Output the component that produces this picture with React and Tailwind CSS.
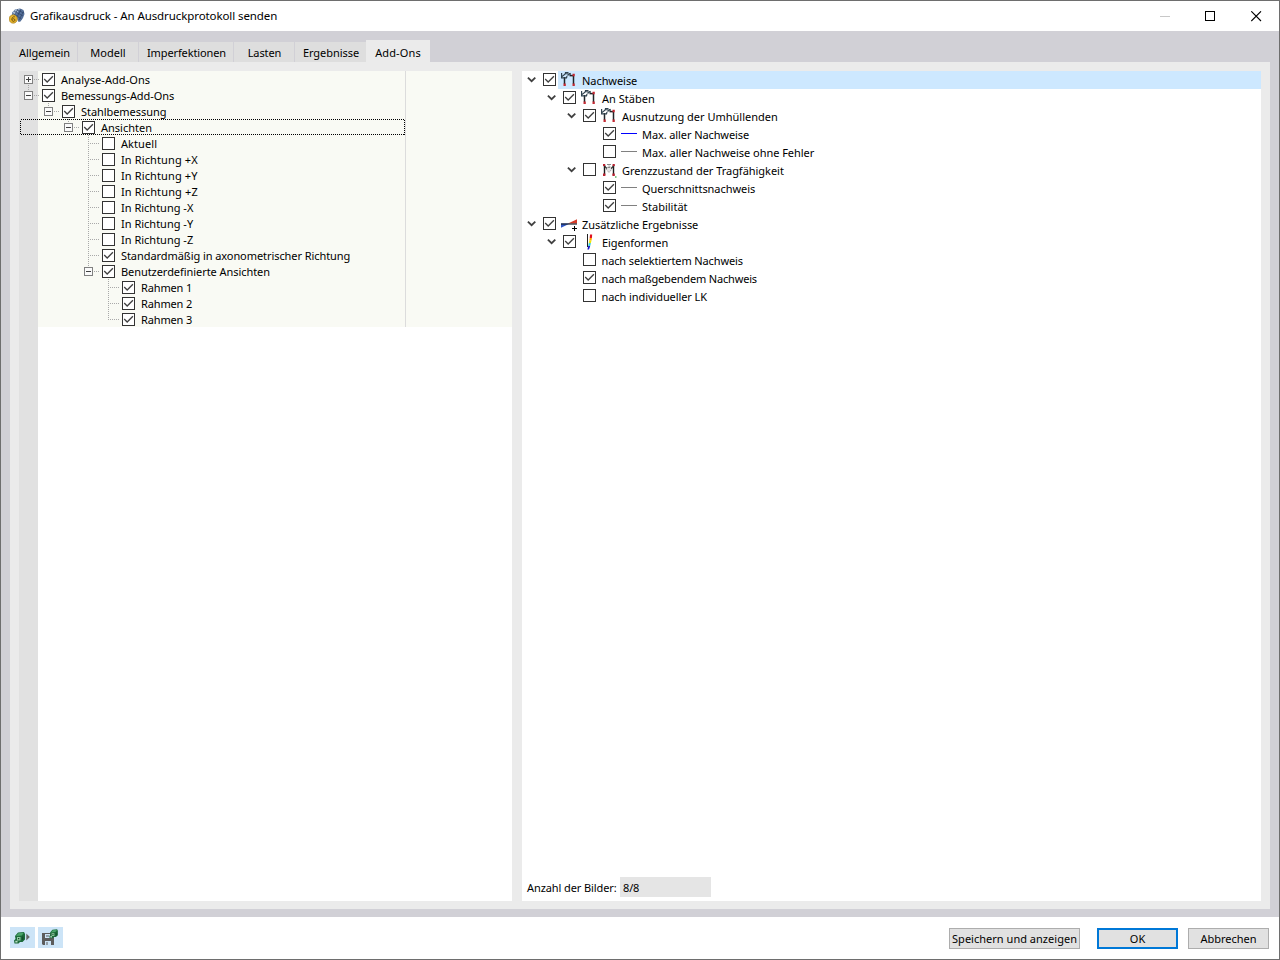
import React from "react";

const leftTree = [
  { level: 0, state: "plus", checked: true, label: "Analyse-Add-Ons", guide: "start", tracking: "tracking-[0.06px]" },
  { level: 0, state: "minus", checked: true, label: "Bemessungs-Add-Ons", guide: "end", tracking: "tracking-[-0.06px]" },
  { level: 1, state: "minus", checked: true, label: "Stahlbemessung", guide: "end", tracking: "tracking-[-0.06px]" },
  { level: 2, state: "minus", checked: true, label: "Ansichten", guide: "end", focused: true },
  { level: 3, checked: false, label: "Aktuell", tracking: "tracking-[0.08px]" },
  { level: 3, checked: false, label: "In Richtung +X", tracking: "tracking-[0.12px]" },
  { level: 3, checked: false, label: "In Richtung +Y", tracking: "tracking-[0.12px]" },
  { level: 3, checked: false, label: "In Richtung +Z", tracking: "tracking-[0.14px]" },
  { level: 3, checked: false, label: "In Richtung -X" },
  { level: 3, checked: false, label: "In Richtung -Y" },
  { level: 3, checked: false, label: "In Richtung -Z" },
  { level: 3, checked: true, label: "Standardmäßig in axonometrischer Richtung", tracking: "tracking-[-0.07px]" },
  { level: 3, state: "minus", checked: true, label: "Benutzerdefinierte Ansichten", guide: "end", tracking: "tracking-[-0.06px]" },
  { level: 4, checked: true, label: "Rahmen 1", tracking: "tracking-[-0.14px]" },
  { level: 4, checked: true, label: "Rahmen 2", tracking: "tracking-[-0.14px]" },
  { level: 4, checked: true, label: "Rahmen 3", guide: "end", tracking: "tracking-[-0.14px]" },
];

const rightTree = [
  { level: 0, open: true, checked: true, icon: "frame", label: "Nachweise", selected: true, tracking: "tracking-[-0.06px]" },
  { level: 1, open: true, checked: true, icon: "frame", label: "An Stäben", tracking: "tracking-[0.03px]" },
  { level: 2, open: true, checked: true, icon: "frame", label: "Ausnutzung der Umhüllenden" },
  { level: 3, checked: true, icon: "blue", label: "Max. aller Nachweise", tracking: "tracking-[-0.1px]" },
  { level: 3, checked: false, icon: "gray", label: "Max. aller Nachweise ohne Fehler", tracking: "tracking-[-0.04px]" },
  { level: 2, open: true, checked: false, icon: "limit", label: "Grenzzustand der Tragfähigkeit", tracking: "tracking-[-0.03px]" },
  { level: 3, checked: true, icon: "gray", label: "Querschnittsnachweis", tracking: "tracking-[-0.06px]" },
  { level: 3, checked: true, icon: "gray", label: "Stabilität" },
  { level: 0, open: true, checked: true, icon: "extra", label: "Zusätzliche Ergebnisse", tracking: "tracking-[-0.04px]" },
  { level: 1, open: true, checked: true, icon: "mode", label: "Eigenformen", tracking: "tracking-[-0.08px]" },
  { level: 2, checked: false, label: "nach selektiertem Nachweis", tracking: "tracking-[-0.13px]" },
  { level: 2, checked: true, label: "nach maßgebendem Nachweis", tracking: "tracking-[-0.17px]" },
  { level: 2, checked: false, label: "nach individueller LK", tracking: "tracking-[-0.08px]" },
];

const leftIndent = ["w-0", "w-5", "w-10", "w-[60px]", "w-20"];
const rightIndent = ["w-[5px]", "w-[25px]", "w-[45px]", "w-[65px]"];

function Checkbox({ checked }) {
  return (
    <svg className="shrink-0" width="13" height="13" viewBox="0 0 13 13">
      <rect x="0.5" y="0.5" width="12" height="12" fill="#fff" stroke="#333" />
      {checked && <path d="M2.2 6L5.2 9L10.9 3.3" fill="none" stroke="#404040" strokeWidth="1.3" />}
    </svg>
  );
}

function Guide({ state, guide }) {
  const leaf = !state;
  return (
    <svg className="shrink-0" width="23" height="16" viewBox="0 0 23 16" shapeRendering="crispEdges">
      <g stroke="#a9a9a9" strokeDasharray="1 1">
        {guide !== "start" && <path d={leaf && guide !== "end" ? "M9.5 0V16" : leaf ? "M9.5 0V9" : "M9.5 0V4"} />}
        {guide === "start" && <path d="M9.5 14V16" />}
        <path d={leaf ? "M9 8.5H20" : "M15 8.5H20"} />
      </g>
      {state && (
        <>
          <rect x="5.5" y="4.5" width="8" height="8" fill="#fafafa" stroke="#808080" />
          <path d={state === "plus" ? "M7 8.5H12M9.5 6V11" : "M7 8.5H12"} stroke="#404040" />
        </>
      )}
    </svg>
  );
}

function LeftRow({ item }) {
  return (
    <div className="flex h-4">
      <div className="relative flex w-[387px] items-center border-r border-[#dcdcdc]">
        <span className={`shrink-0 ${leftIndent[item.level]}`} />
        <Guide state={item.state} guide={item.guide} />
        <Checkbox checked={item.checked} />
        <span className={`ml-1.5 whitespace-nowrap leading-4 translate-y-px ${item.tracking ?? ""}`}>{item.label}</span>
        {item.focused && (
          <svg className="absolute top-0 left-px" width="386" height="16" shapeRendering="crispEdges">
            <rect x="0.5" y="0.5" width="384" height="15" fill="none" stroke="#000" strokeDasharray="1 1" />
          </svg>
        )}
      </div>
    </div>
  );
}

function NodeIcon({ kind }) {
  if (kind === "blue" || kind === "gray") {
    return (
      <svg className="shrink-0" width="16" height="18" viewBox="0 0 16 18">
        <path d="M0 8.5H16" stroke={kind === "blue" ? "#0000ff" : "#808080"} />
      </svg>
    );
  }
  if (kind === "frame") {
    return (
      <svg className="shrink-0" width="16" height="18" viewBox="0 0 16 18">
        <path d="M3.5 6V13M12.5 5V13" fill="none" stroke="#1f2428" strokeWidth="1.5" />
        <path d="M8.5 4.6H12" fill="none" stroke="#1f2428" strokeWidth="1.5" />
        <path d="M0.6 2V6.8H5.5L6 5" fill="none" stroke="#31434f" strokeWidth="1.2" />
        <path d="M1 5.5L4 3.2L4.5 1.5H7.5M4 2.5L10 3.2M6.5 4.5L9.5 2.2" fill="none" stroke="#31434f" strokeWidth="1.1" />
        <path d="M2.5 12.5H4.8V15H2.5ZM11.5 12.5H13.8V15H11.5ZM11.5 2.8H13.8V5.2H11.5Z" fill="#c22832" />
      </svg>
    );
  }
  if (kind === "limit") {
    return (
      <svg className="shrink-0" width="16" height="18" viewBox="0 0 16 18">
        <path d="M3.5 4V14M12.5 4V14" fill="none" stroke="#1c1c1c" strokeWidth="1.4" />
        <path d="M8 4.5L11 8L8 11.5L5 8Z" fill="#e3e3e3" stroke="#a5a5a5" strokeDasharray="2 1" />
        <path d="M3 4.5L5.8 7.5M13 4.5L10.2 7.5" fill="none" stroke="#333" strokeWidth="1.2" />
        <path d="M6 3.5H10M7 6.5H9" stroke="#888" />
        <path d="M2 3H4.2V5H2ZM11.6 3H13.8V5H11.6ZM2 12.5H4.4V15H2ZM11.4 12.5H13.8V15H11.4Z" fill="#b92331" />
        <path d="M14 15H15.5V17H14Z" fill="#82c88b" />
      </svg>
    );
  }
  if (kind === "extra") {
    return (
      <svg className="shrink-0" width="16" height="18" viewBox="0 0 16 18">
        <path d="M0 8.5H9L0 12.8Z" fill="#2f55c4" />
        <path d="M7 8.5L16 4.2V8.5Z" fill="#d53b28" />
        <path d="M0 9H16" stroke="#1d2630" strokeWidth="1.2" />
        <path d="M13.5 11V16M11 13.5H16" stroke="#000" />
      </svg>
    );
  }
  return (
    <svg className="shrink-0" width="16" height="18" viewBox="0 0 16 18">
      <path d="M6.5 1V14" stroke="#222" />
      <path d="M9 1.5H11.2L10.9 5H8.7Z" fill="#e01020" />
      <path d="M8.7 5H10.9L10.5 7.5H8.3Z" fill="#ffa000" />
      <path d="M8.3 7.5H10.5L9.9 10H7.8Z" fill="#f0e800" />
      <path d="M7.8 10H9.9L9.2 13H7.2Z" fill="#35d0d8" />
      <path d="M7.2 13H9.2L8 16.5H6.4Z" fill="#1818c8" />
    </svg>
  );
}

function RightRow({ item }) {
  return (
    <div className="flex h-[18px]">
      <span className={`shrink-0 ${rightIndent[item.level]}`} />
      <svg className="mr-1.5 shrink-0" width="10" height="18" viewBox="0 0 10 18">
        {item.open && <path d="M0.9 6.6L4.6 10.2L8.3 6.6" fill="none" stroke="#404040" strokeWidth="1.8" />}
      </svg>
      <span className="mr-0.5 pt-0.5"><Checkbox checked={item.checked} /></span>
      <span className={`flex grow pl-[3px] ${item.selected ? "bg-[#cde8ff]" : ""}`}>
        {item.icon && <NodeIcon kind={item.icon} />}
        <span className={`whitespace-nowrap leading-[18px] translate-y-px ${item.icon ? "ml-[5px]" : "ml-[0.5px]"} ${item.tracking ?? ""}`}>{item.label}</span>
      </span>
    </div>
  );
}

function AppIcon() {
  return (
    <svg width="16" height="16" viewBox="0 0 16 16">
      <path d="M3 4.5L6 1.5L11 0.5L14.5 2L15.5 6L14 10L11.5 13.5L9.5 14L8 10L3 8Z" fill="#56719b" />
      <path d="M3.5 4.5L6.5 1.5L11 0.8L8.5 4.5L4 7Z" fill="#a9bdd6" />
      <path d="M9 1L6 6M12 1.5L8.5 8M14.5 3.5L10 12M5 3L14 8M8 2L15 5M4 5.5L12.5 11" stroke="#2f4467" strokeWidth="0.7" />
      <circle cx="4.2" cy="11" r="4.2" fill="#e5b32c" stroke="#9b7620" strokeWidth="0.6" />
      <path d="M5.8 8.8C3.8 8.4 2.8 10 2.9 11.6C3.1 14 6 13.7 5.9 11.9C5.7 10.3 3.5 10.4 3 11.6" fill="none" stroke="#73530b" strokeWidth="1" />
    </svg>
  );
}

function Cube() {
  return (
    <>
      <path d="M1 4L4 0.5L10 0L11 2V7.5L8.5 10H6L4.5 11.5H0.5L0 8.5L1.5 7Z" fill="#1c6b3b" />
      <path d="M2 4L4.5 1.3L9.8 0.8L7.8 3.5Z" fill="#4aa56a" />
      <path d="M3 5H6.5V8.5H3Z" fill="#8fc9a0" />
      <path d="M4 6H5.3V7.3H4Z" fill="#124428" />
      <path d="M1.3 8.8H3.5V10.5H1.3Z" fill="#b8dcc2" />
      <path d="M8.3 4.5H9.3V8H8.3Z" fill="#124428" />
    </>
  );
}

function Tab({ className, children }) {
  return (
    <div className={`flex shrink-0 items-center justify-center ${className}`}>
      <span className="translate-y-px whitespace-nowrap">{children}</span>
    </div>
  );
}

export default function App() {
  return (
    <div className="flex h-[960px] w-[1280px] flex-col overflow-hidden border border-[#6e6e6e] bg-white font-['Noto_Sans',sans-serif] text-[11px] text-black">
      <header className="flex h-[30px] shrink-0 items-center pl-2">
        <AppIcon />
        <span className="ml-[5px] text-[11.5px] tracking-[-0.09px] whitespace-nowrap">Grafikausdruck - An Ausdruckprotokoll senden</span>
        <div className="mr-[17px] ml-auto flex gap-[35px]">
          <svg width="11" height="11" shapeRendering="crispEdges"><path d="M1 5.5H11" stroke="#c8c8c8" /></svg>
          <svg width="11" height="11" shapeRendering="crispEdges"><rect x="0.5" y="0.5" width="9" height="9" fill="none" stroke="#000" /></svg>
          <svg width="11" height="11"><path d="M0.3 0.3L10 10M10 0.3L0.3 10" stroke="#000" strokeWidth="1.1" /></svg>
        </div>
      </header>

      <main className="flex h-[886px] shrink-0 flex-col bg-[#d1d0d6] px-[9px] pt-[9px] pb-2">
        <nav className="flex h-[22px] shrink-0 items-end">
          <Tab className="mr-px h-5 w-[67px] bg-[#dedede] pl-0.5 tracking-[-0.1px]">Allgemein</Tab>
          <Tab className="mr-px h-5 w-[60px] bg-[#dedede]">Modell</Tab>
          <Tab className="mr-px h-5 w-[94px] bg-[#dedede] pl-px tracking-[-0.12px]">Imperfektionen</Tab>
          <Tab className="mr-px h-5 w-[60px] bg-[#dedede] pl-px tracking-[-0.1px]">Lasten</Tab>
          <Tab className="h-5 w-[71px] bg-[#dedede] pl-px tracking-[-0.05px]">Ergebnisse</Tab>
          <Tab className="h-[22px] w-16 bg-[#ebebeb] pt-[3px] tracking-[0.13px]">Add-Ons</Tab>
        </nav>
        <div className="flex grow gap-2.5 bg-[#ebebeb] px-[9px] pt-[9px] pb-2">
          <section className="w-[493px] bg-[linear-gradient(to_right,#e1e1e1_19px,#ffffff_19px)]">
            <div className="bg-[linear-gradient(to_right,#e1e1e1_19px,#f9faf4_19px)]">
              {leftTree.map((item) => <LeftRow key={item.label} item={item} />)}
            </div>
          </section>
          <section className="flex grow flex-col bg-white">
            <div>{rightTree.map((item) => <RightRow key={item.label} item={item} />)}</div>
            <div className="mt-auto mb-1 flex h-5 items-center pl-[5px]">
              <span className="w-[93px] translate-y-px tracking-[-0.1px] whitespace-nowrap">Anzahl der Bilder:</span>
              <span className="flex h-5 w-[91px] items-center bg-[#e5e5e5] pt-0.5 pl-[3px] tracking-[-0.15px]">8/8</span>
            </div>
          </section>
        </div>
      </main>

      <footer className="flex grow items-start pr-2.5 pl-[9px]">
        <div className="mt-2.5 flex gap-[3px]">
          <button className="flex h-[21px] w-[25px] items-center justify-center bg-[#cce4f7]">
            <svg width="17" height="12" viewBox="0 0 17 12"><Cube /><path d="M12.3 1.5L15.8 5L12.3 8.5Z" fill="#666" /></svg>
          </button>
          <button className="flex h-[21px] w-[25px] items-center justify-center bg-[#cce4f7]">
            <svg width="17" height="17" viewBox="0 0 17 17">
              <path d="M0 4H9V8H12V16H1L0 15Z" fill="#5c5c5c" />
              <path d="M3 5H8V9H3ZM3 12H9V16H3Z" fill="#cce4f7" />
              <path d="M4 7H7M5 13V16" stroke="#5c5c5c" />
              <g transform="translate(7.3 0.3) scale(0.78)"><Cube /></g>
            </svg>
          </button>
        </div>
        <div className="mt-[11px] ml-auto flex">
          <button className="flex h-[21px] w-[131px] items-center justify-center border border-[#adadad] bg-[#e1e1e1] pt-0.5 tracking-[0.02px] whitespace-nowrap"><span>Speichern und anzeigen</span></button>
          <button className="ml-[17px] flex h-[21px] w-[81px] items-center justify-center border-2 border-[#0078d7] bg-[#e1e1e1] pt-0.5">OK</button>
          <button className="ml-2.5 flex h-[21px] w-[81px] items-center justify-center border border-[#adadad] bg-[#e1e1e1] pt-0.5">Abbrechen</button>
        </div>
      </footer>
    </div>
  );
}
